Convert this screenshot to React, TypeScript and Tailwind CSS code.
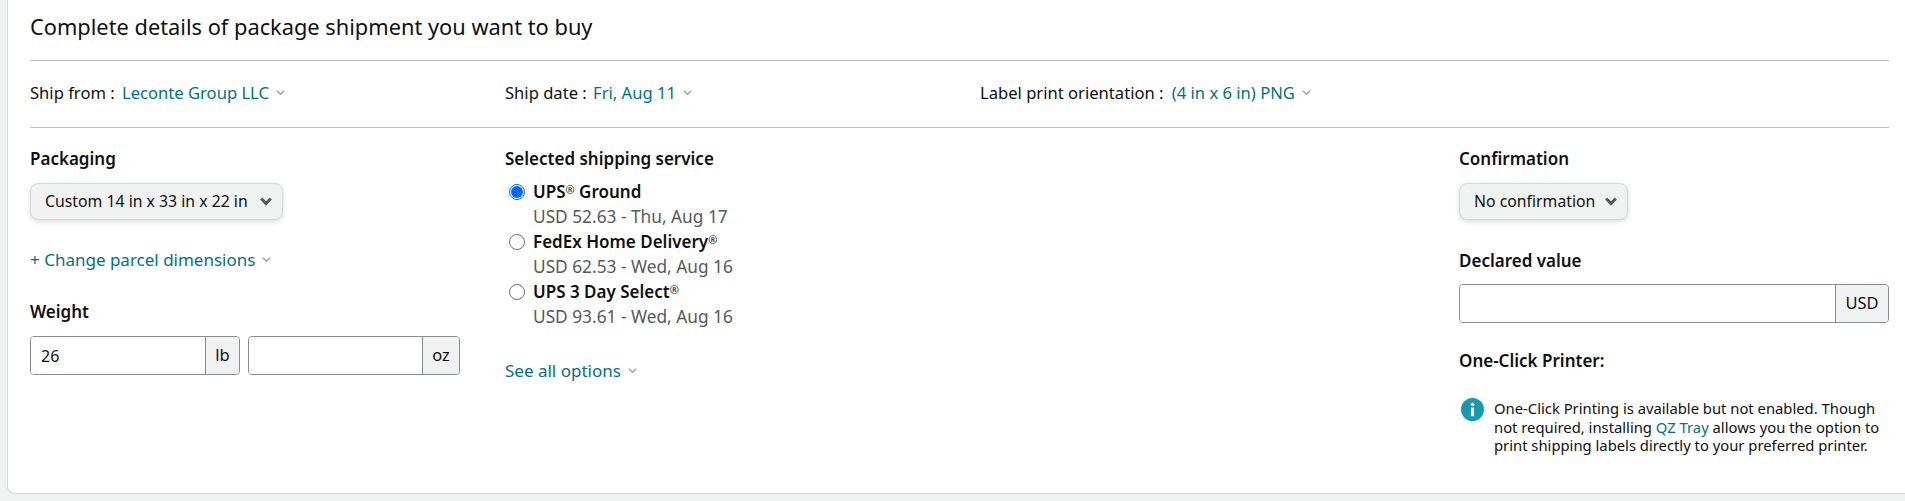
const font = "font-['Noto_Sans',sans-serif]"

const services = [
  { name: "UPS", rest: " Ground", info: "USD 52.63 - Thu, Aug 17", selected: true },
  { name: "FedEx Home Delivery", rest: "", info: "USD 62.53 - Wed, Aug 16", selected: false },
  { name: "UPS 3 Day Select", rest: "", info: "USD 93.61 - Wed, Aug 16", selected: false },
]

function Caret() {
  return (
    <svg width="9" height="6" viewBox="0 0 9 6" className="ml-[7px] inline-block align-[3px]">
      <path d="M0.8 0.8 L4.5 4.2 L8.2 0.8" fill="none" stroke="#9aa0a0" strokeWidth="1.4" />
    </svg>
  )
}

function SelectButton({ label, width }: { label: string; width: string }) {
  return (
    <div className={`flex h-[37px] items-center justify-between rounded-lg border border-[#d5d9d9] bg-[#f0f2f2] pl-[14px] pr-[10px] text-[15.8px] text-[#0f1111] shadow-[0_2px_5px_rgba(15,17,17,0.15)] ${width}`}>
      <span className="whitespace-nowrap">{label}</span>
      <svg width="12" height="9" viewBox="0 0 12 9" className="shrink-0">
        <path d="M1.2 1.4 L6 6.6 L10.8 1.4" fill="none" stroke="#555959" strokeWidth="3" />
      </svg>
    </div>
  )
}

function UnitInput({ value, unit, className, unitWidth }: { value?: string; unit: string; className: string; unitWidth: string }) {
  return (
    <div className={`flex h-[39px] overflow-hidden rounded-[4px] border border-[#888c8c] ${className}`}>
      <div className="flex flex-1 items-center bg-white px-[10px] text-[16px] text-[#0f1111]">{value}</div>
      <div className={`flex items-center justify-center border-l border-[#888c8c] bg-[#f0f2f2] text-[16.5px] text-[#0f1111] ${unitWidth}`}>{unit}</div>
    </div>
  )
}

export default function App() {
  return (
    <div className={`${font} h-[501px] w-[1905px] overflow-hidden bg-[#f0f2f2] pl-[7px] pb-[7px] text-[17px] text-[#0f1111]`}>
      <div className="h-[494px] rounded-bl-lg border-b border-l border-[#d5d9d9] bg-white pl-[22px] pr-[16px]">
        <h1 className="flex h-[60px] items-center pb-[6px] text-[21.8px] leading-none">Complete details of package shipment you want to buy</h1>
        <hr className="border-[#bbbfbf]" />
        <div className="flex h-[67px] items-center border-b border-[#bbbfbf] pb-[1px] text-[16.6px]">
          <div className="w-[475px]">
            Ship from : <span className="ml-[3px] text-[#007185]">Leconte Group LLC</span>
            <Caret />
          </div>
          <div className="w-[475px]">
            Ship date : <span className="ml-[2px] text-[#007185]">Fri, Aug 11</span>
            <Caret />
          </div>
          <div>
            Label print orientation : <span className="ml-[4px] text-[#007185]">(4 in x 6 in) PNG</span>
            <Caret />
          </div>
        </div>

        <div className="flex pt-[21px]">
          <div className="w-[475px]">
            <div className="leading-[20px] font-semibold">Packaging</div>
            <div className="mt-[14px]">
              <SelectButton label="Custom 14 in x 33 in x 22 in" width="w-[253px]" />
            </div>
            <div className="mt-[30px] leading-[20px] text-[#007185]">
              + Change parcel dimensions
              <Caret />
            </div>
            <div className="mt-[32px] leading-[20px] font-semibold">Weight</div>
            <div className="mt-[14px] flex gap-[8px]">
              <UnitInput value="26" unit="lb" className="w-[210px]" unitWidth="w-[34px]" />
              <UnitInput unit="oz" className="w-[212px]" unitWidth="w-[37px]" />
            </div>
          </div>

          <div className="flex-1">
            <div className="leading-[20px] font-semibold">Selected shipping service</div>
            <div className="mt-[9px]">
              {services.map((s) => (
                <div key={s.name} className="flex h-[50px]">
                  <div className="w-[28px] pl-[4px] pt-[6px]">
                    {s.selected ? (
                      <div className="flex h-[16px] w-[16px] items-center justify-center rounded-full border border-[#0066ff] bg-white">
                        <div className="h-[12px] w-[12px] rounded-full bg-[#0066ff]" />
                      </div>
                    ) : (
                      <div className="h-[16px] w-[16px] rounded-full border border-[#6f7373] bg-white" />
                    )}
                  </div>
                  <div className="pt-[1px]">
                    <div className="leading-[25px] font-semibold">
                      {s.name}
                      <span className="relative -top-[4px] text-[11px] font-normal">®</span>
                      {s.rest}
                    </div>
                    <div className="text-[17.3px] leading-[21px] text-[#565959]">{s.info}</div>
                  </div>
                </div>
              ))}
            </div>
            <div className="mt-[33px] leading-[20px] text-[#007185]">
              See all options
              <Caret />
            </div>
          </div>

          <div className="w-[430px]">
            <div className="leading-[20px] font-semibold">Confirmation</div>
            <div className="mt-[14px]">
              <SelectButton label="No confirmation" width="w-[169px]" />
            </div>
            <div className="mt-[31px] leading-[20px] font-semibold">Declared value</div>
            <div className="mt-[13px]">
              <UnitInput unit="USD" className="w-full" unitWidth="w-[53px]" />
            </div>
            <div className="mt-[28px] leading-[20px] font-semibold">One-Click Printer:</div>
            <div className="mt-[28px] flex text-[14.8px] leading-[18.5px]">
              <svg width="23" height="23" viewBox="0 0 24 24" className="-mt-[1px] ml-[2px] mr-[10px] shrink-0">
                <circle cx="12" cy="12" r="12" fill="#1a98ad" />
                <rect x="10.4" y="10" width="3.2" height="9" fill="#fff" />
                <circle cx="12" cy="6.8" r="1.9" fill="#fff" />
              </svg>
              <p>
                One-Click Printing is available but not enabled. Though not required, installing <span className="text-[#007185]">QZ Tray</span> allows you the option to print shipping labels directly to your preferred printer.
              </p>
            </div>
          </div>
        </div>
      </div>
    </div>
  )
}
